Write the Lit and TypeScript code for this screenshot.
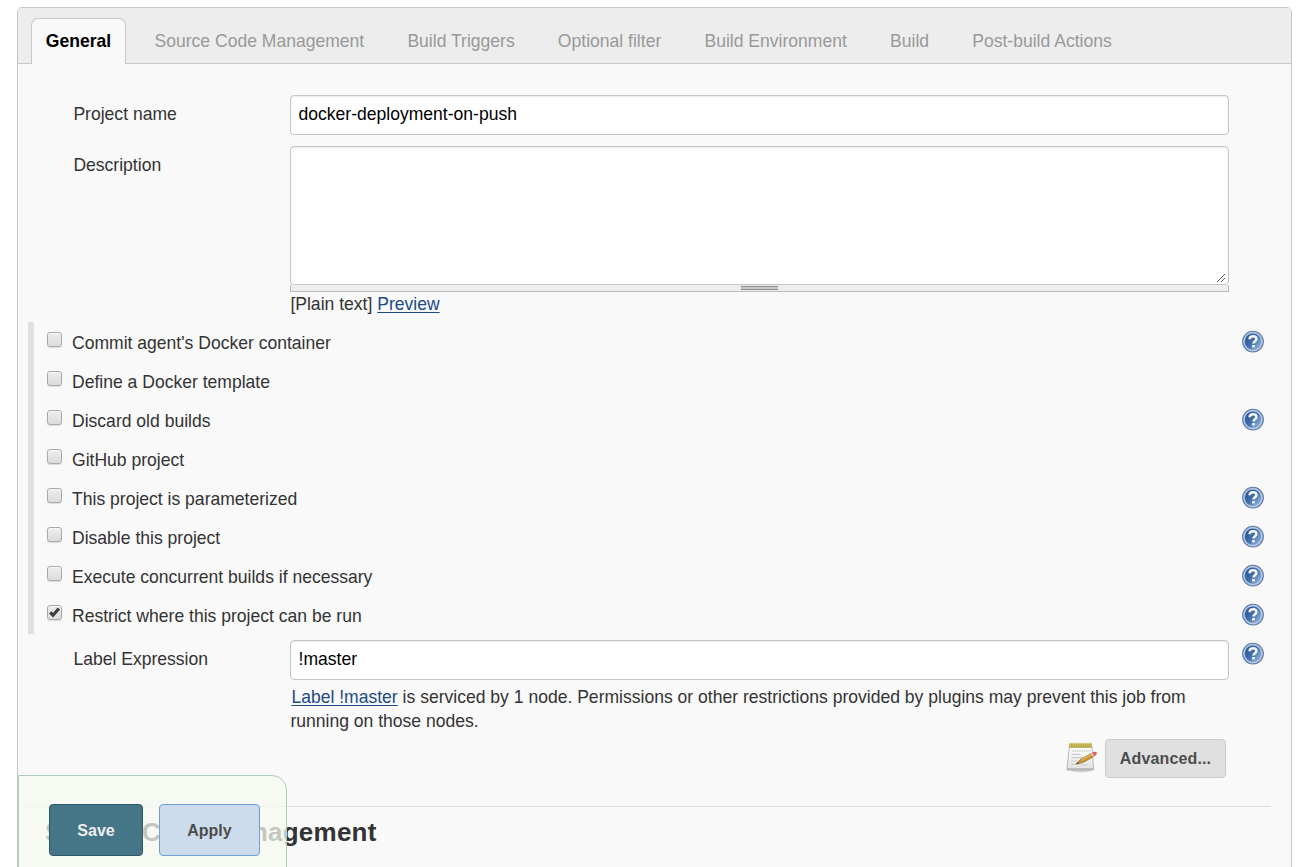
import { LitElement, html, svg, css, nothing } from "lit";
import { customElement, property } from "lit/decorators.js";
import { classMap } from "lit/directives/class-map.js";

@customElement("help-icon")
class HelpIcon extends LitElement {
  static styles = css`
    :host { display: block; width: 24px; height: 24px; }
    svg { display: block; }
  `;
  render() {
    return html`<svg width="24" height="24" viewBox="0 0 24 24">
      <defs>
        <linearGradient id="ball" x1="0" y1="0.1" x2="1" y2="0.9">
          <stop offset="0" stop-color="#25508f" />
          <stop offset="0.5" stop-color="#4470ae" />
          <stop offset="1" stop-color="#9dbce2" />
        </linearGradient>
      </defs>
      <circle cx="12" cy="11.6" r="10.9" fill="#5d7ba8" />
      <circle cx="12" cy="11.6" r="9.8" fill="#b4c8e2" />
      <circle cx="12" cy="11.6" r="8.2" fill="url(#ball)" />
      <path d="M8.6 9.2C8.7 7.1 10.2 6.3 12 6.3c2 0 3.4 1 3.4 2.7 0 2.2-2.9 2.2-2.9 4.5" fill="none" stroke="#f4f7fb" stroke-width="2.5" />
      <rect x="11" y="14.9" width="2.9" height="2.5" rx="0.6" fill="#f4f7fb" />
    </svg>`;
  }
}

@customElement("notepad-icon")
class NotepadIcon extends LitElement {
  static styles = css`
    :host { display: block; width: 32px; height: 32px; }
    svg { display: block; }
  `;
  render() {
    const rings = Array.from({ length: 10 }, (_, i) => 4.6 + i * 2.3);
    return html`<svg width="32" height="32" viewBox="0 0 32 32">
      <defs>
        <linearGradient id="paper" x1="0" y1="0" x2="0" y2="1">
          <stop offset="0" stop-color="#ffffff" />
          <stop offset="1" stop-color="#e4e4e4" />
        </linearGradient>
      </defs>
      <ellipse cx="15" cy="29.6" rx="10" ry="1.8" fill="#d2d2d2" />
      <path d="M3 5H26.4L28 28.2Q28 29.6 27 29.6H1.6Q.4 29.6.5 28.2Z" fill="#b4b4b4" />
      <path d="M3.8 6H25.6L27 27.2H1.6Z" fill="url(#paper)" />
      <rect x="3.2" y="2.4" width="22.6" height="4.4" fill="#b5a53f" />
      ${rings.map((x) => svg`<path d="M${x} 1.6V5.6" stroke="#d9cd72" stroke-width=".9" />`)}
      <path d="M5.8 10H24.5M5.6 13.4H14M5.4 16.6H18M5.2 20H11M5 23.4H9" stroke="#cbcbcb" stroke-width="1.2" />
      <path d="M12 23.8H22" stroke="#d2d2d2" stroke-width="1.2" />
      <path d="M9.8 23.2L14.8 18.2 26.4 11.8 28.4 15.2 17.4 21.2Z" fill="#d0973a" stroke="#966c2c" stroke-width=".8" />
      <path d="M15.4 18.6L26.8 12.8" stroke="#ebbd68" stroke-width="1.1" />
      <path d="M9.8 23.2L12 21 13.2 22.2Z" fill="#50463a" />
      <path d="M25 12.3L26.4 11.6 28.5 15.2 27.2 15.9Z" fill="#d5cdc2" />
      <path d="M26.4 11.6Q29.2 9.7 30.7 11.6 31.4 13.8 28.5 15.2Z" fill="#de5f5f" />
    </svg>`;
  }
}

@customElement("option-row")
class OptionRow extends LitElement {
  @property() label = "";
  @property({ type: Boolean }) checked = false;
  @property({ type: Boolean }) help = false;

  static styles = css`
    :host { display: flex; height: 39px; align-items: flex-start; }
    .box {
      box-sizing: border-box; width: 15px; height: 15px; margin: 10px 10px 0 13px;
      border: 1px solid #a9a9a9; border-radius: 3px;
      background: linear-gradient(#ededed, #dcdcdc);
      box-shadow: 0 1px 1px rgba(0, 0, 0, 0.12), inset 0 1px 1px rgba(255, 255, 255, 0.7);
    }
    .box svg { display: block; }
    .text { flex: 1; line-height: 20px; padding-top: 11px; }
    help-icon { margin: 8px 26px 0 0; }
  `;

  render() {
    return html`
      <span class="box">${this.checked
        ? html`<svg width="13" height="13" viewBox="0 0 13 13"><path d="M2.2 6.3L5 9.2 10.9 2.4" fill="none" stroke="#3d3d3d" stroke-width="3.1" /></svg>`
        : nothing}</span>
      <span class="text">${this.label}</span>
      ${this.help ? html`<help-icon></help-icon>` : nothing}
    `;
  }
}

@customElement("app-root")
class AppRoot extends LitElement {
  private tabs = [
    "General",
    "Source Code Management",
    "Build Triggers",
    "Optional filter",
    "Build Environment",
    "Build",
    "Post-build Actions",
  ];

  private options = [
    { label: "Commit agent's Docker container", help: true },
    { label: "Define a Docker template" },
    { label: "Discard old builds", help: true },
    { label: "GitHub project" },
    { label: "This project is parameterized", help: true },
    { label: "Disable this project", help: true },
    { label: "Execute concurrent builds if necessary", help: true },
    { label: "Restrict where this project can be run", help: true, checked: true },
  ];

  static styles = css`
    :host {
      display: block; position: relative; box-sizing: border-box; height: 867px; overflow: hidden;
      padding: 7px 4px 0 17px; background: #fff; color: #333;
      font: 17.56px/24px "Liberation Sans", Arial, sans-serif;
    }
    .panel {
      box-sizing: border-box; height: 880px; background: #f9f9f9;
      border: 1px solid #c8c8c8; border-radius: 5px 5px 0 0;
    }
    .tabs {
      display: flex; gap: 13.2px; box-sizing: border-box; height: 56px; padding: 10px 0 0 13px;
      background: #ededed; border-bottom: 1px solid #c8c8c8; border-radius: 4px 4px 0 0;
    }
    .tab {
      box-sizing: border-box; height: 46px; padding: 0 14px; line-height: 44px;
      border: 1px solid transparent; border-bottom: 0; border-radius: 7px 7px 0 0;
      color: #999; white-space: nowrap;
    }
    .active {
      width: 95px; padding: 0; text-align: center; background: #f9f9f9;
      border-color: #c8c8c8; color: #000; font-weight: bold; margin-right: 0.3px;
    }
    .form { padding: 31px 0 0 10px; }
    .row { display: grid; grid-template-columns: 217px 939px 1fr; padding-left: 45px; }
    .label { padding: 7px 0 0 0.4px; }
    .field {
      box-sizing: border-box; height: 40px; padding: 6px 7.5px; background: #fff; color: #000;
      border: 1px solid #c6c6c6; border-radius: 4px; box-shadow: inset 0 1px 2px rgba(0, 0, 0, 0.08);
    }
    .description { margin-top: 11px; }
    .area { display: flex; align-items: flex-end; justify-content: flex-end; height: 139px; padding: 0 2px 1px 0; }
    .handle {
      box-sizing: border-box; height: 7px; border: 1px solid #bbb; border-top: 0; background: #eee;
      display: flex; justify-content: center; align-items: center;
    }
    .grip { box-sizing: border-box; width: 37px; height: 4px; border: solid #8c8c8c; border-width: 1px 0; background: #c8c8c8; }
    .preview { line-height: 24px; padding-left: 0.4px; }
    a { color: #204a87; text-decoration: underline; text-decoration-thickness: 1px; text-underline-offset: 2px; }
    .options { border-left: 6px solid #e0e0e0; margin-top: 6px; height: 312px; }
    .expression { margin-top: 6px; }
    .expression help-icon { margin: 2px 0 0 12px; }
    .note { margin-top: 5px; padding-left: 0.4px; white-space: nowrap; }
    .note a { margin-left: 1px; }
    .advanced { display: flex; justify-content: flex-end; padding: 6px 65px 0 0; gap: 7px; }
    .advanced notepad-icon { margin-top: 2px; }
    .button {
      box-sizing: border-box; display: flex; align-items: center; justify-content: center;
      padding-top: 1px; border: 1px solid #ccc; border-radius: 4px; font-size: 16px; font-weight: bold;
    }
    .more { width: 121px; height: 39px; background: #e0e0e0; color: #4d4d4d; letter-spacing: 0.15px; }
    .section { margin: 28px 20px 0 -4px; border-top: 1px solid #ddd; }
    .heading { margin: 0; padding: 10px 0 0 21px; font-size: 26px; line-height: 30px; font-weight: bold; letter-spacing: 0.23px; }
    .bottom {
      position: absolute; left: 18px; top: 775px; box-sizing: border-box; width: 269px; height: 100px;
      display: flex; gap: 16px; padding: 28px 0 0 30px; background: rgba(245, 249, 239, 0.75);
      border: 1px solid #a9cfb9; border-radius: 0 15px 0 0;
    }
    .save { width: 94px; height: 52px; background: #457687; border-color: #2f5666; color: #eee; }
    .apply { width: 101px; height: 52px; background: #ccdcec; border-color: #6f9fd4; color: #4d4d4d; }
  `;

  render() {
    return html`
      <main class="panel">
        <nav class="tabs">
          ${this.tabs.map((t, i) => html`<span class=${classMap({ tab: true, active: i === 0 })}>${t}</span>`)}
        </nav>
        <div class="form">
          <div class="row">
            <span class="label">Project name</span>
            <div class="field">docker-deployment-on-push</div>
          </div>
          <div class="row description">
            <span class="label">Description</span>
            <div>
              <div class="field area">
                <svg width="10" height="10" viewBox="0 0 10 10"><path d="M1 9L9 1M5 9L9 5" stroke="#666" stroke-width="1" /></svg>
              </div>
              <div class="handle"><span class="grip"></span></div>
              <div class="preview">[Plain text] <a>Preview</a></div>
            </div>
          </div>
          <div class="options">
            ${this.options.map(
              (o) => html`<option-row .label=${o.label} ?help=${o.help} ?checked=${o.checked}></option-row>`
            )}
          </div>
          <div class="row expression">
            <span class="label">Label Expression</span>
            <div>
              <div class="field">!master</div>
              <div class="note">
                <a>Label !master</a> is serviced by 1 node. Permissions or other restrictions provided by plugins may prevent this job from<br />running on those nodes.
              </div>
            </div>
            <help-icon></help-icon>
          </div>
          <div class="advanced">
            <notepad-icon></notepad-icon>
            <div class="button more">Advanced...</div>
          </div>
          <section class="section"><h2 class="heading">Source Code Management</h2></section>
        </div>
      </main>
      <div class="bottom">
        <div class="button save">Save</div>
        <div class="button apply">Apply</div>
      </div>
    `;
  }
}
